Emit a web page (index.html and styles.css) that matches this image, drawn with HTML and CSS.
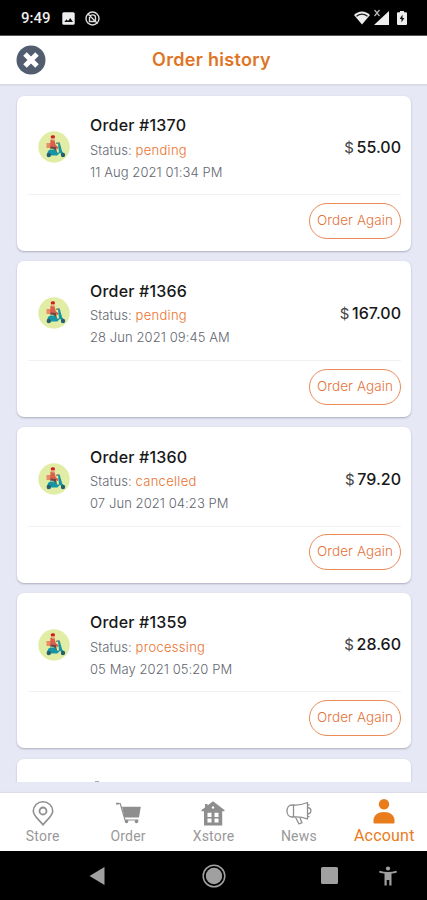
FILE: index.html
```
<!DOCTYPE html>
<html lang="en">
<head>
<meta charset="utf-8">
<title>Order history</title>
<link rel="stylesheet" href="styles.css">
</head>
<body>
<svg width="0" height="0" class="defs" aria-hidden="true">
  <symbol id="scooter" viewBox="0 0 32 32">
    <circle cx="16" cy="16" r="15.7" fill="#e1eda5"/>
    <path d="M8.5 12h5v5h-5z" fill="#e98b68"/>
    <path d="M12.5 8.5l4 .5 1.2 5 3 2.5-1 1.4-4.2-1.9-3.5.5z" fill="#d9604a"/>
    <path d="M13 15.5l5 .5 1 6h-2.2l-1-4-4-.5z" fill="#6b4a43"/>
    <path d="M12.8 5.5c.4-1.6 3.8-1.8 4.2 0l-.4 2h-3.5z" fill="#cf201d"/>
    <path d="M14 7.5h2.7v2H14z" fill="#efad8b"/>
    <path d="M20 12.5l1.8-.5 2.4 8.500 2.600 3-3-.5-2-1-2.500 2.500h-9.500c-1-3.500.5-6 3.500-6h4l1 3h2.700z" fill="#1695a5"/>
    <path d="M18 12.300l3.500-.5" stroke="#4f5960" stroke-width="1"/>
    <circle cx="10.800" cy="24" r="2.200" fill="#245f70"/>
    <circle cx="25" cy="24" r="2.200" fill="#245f70"/>
  </symbol>
</svg>
<div class="screen">
  <div class="statusbar">
    <span class="clock">9:49</span>
    <svg class="s-img" width="13" height="13" viewBox="0 0 13 13"><rect x=".3" y=".3" width="12.400" height="12.400" rx="1.500" fill="#eee"/><path d="M2.300 10l2.200-2.800 1.500 1.700 2.200-2.800 2.800 3.900z" fill="#111"/></svg>
    <svg class="s-dnd" width="15" height="15" viewBox="0 0 15 15" fill="none" stroke="#ddd"><circle cx="7.500" cy="7.500" r="6.500" stroke-width="1.400"/><path d="M4.500 10.500v-4c0-3.500 6-3.500 6 0v4zM3 3l9.500 9.500" stroke-width="1.400"/></svg>
    <span class="spacer"></span>
    <svg width="16" height="14" viewBox="0 0 16 14"><path d="M0 4C4.500-.7 11.500-.7 16 4L8 13.500z" fill="#eee"/><path d="M2.500 5.300c3.500-2.800 7.500-2.800 11 0" fill="none" stroke="#222" stroke-width="1.300"/></svg>
    <svg class="s-cell" width="17" height="17" viewBox="0 0 17 17"><path d="M16 2v14H1z" fill="#eee"/><path d="M1.500 1l5 6M6.500 1l-5 6" stroke="#000" stroke-width="3"/><path d="M1.500 1l5 6M6.500 1l-5 6" stroke="#bbb" stroke-width="1.200"/></svg>
    <svg class="s-bat" width="10" height="14" viewBox="0 0 10 14"><path d="M3 0h4v1.300h2.300l.7.700v11.300l-.7.700H.7l-.7-.7V2l.7-.7H3z" fill="#eee"/><path d="M5.500 3.500L2.700 8h1.800v3.500L7.300 7H5.500z" fill="#111"/></svg>
  </div>
  <header class="header">
    <svg class="close" width="30" height="30" viewBox="0 0 30 30"><circle cx="15" cy="15" r="14.500" fill="#525d70"/><path d="M9 9l12 12M21 9L9 21" stroke="#fff" stroke-width="5"/></svg>
    <h1 class="title">Order history</h1>
  </header>
  <main class="list">
    <article class="card">
      <div class="summary">
        <svg class="avatar"><use href="#scooter"/></svg>
        <div class="info"><h2 class="name">Order #1370</h2><p class="line">Status: <span class="state">pending</span></p><p class="line date">11 Aug 2021 01:34 PM</p></div>
        <div class="price"><span class="cur">$</span> 55.00</div>
      </div>
      <div class="actions"><button class="again">Order Again</button></div>
    </article>
    <article class="card">
      <div class="summary">
        <svg class="avatar"><use href="#scooter"/></svg>
        <div class="info"><h2 class="name">Order #1366</h2><p class="line">Status: <span class="state">pending</span></p><p class="line date">28 Jun 2021 09:45 AM</p></div>
        <div class="price"><span class="cur">$</span> 167.00</div>
      </div>
      <div class="actions"><button class="again">Order Again</button></div>
    </article>
    <article class="card">
      <div class="summary">
        <svg class="avatar"><use href="#scooter"/></svg>
        <div class="info"><h2 class="name">Order #1360</h2><p class="line">Status: <span class="state">cancelled</span></p><p class="line date">07 Jun 2021 04:23 PM</p></div>
        <div class="price"><span class="cur">$</span> 79.20</div>
      </div>
      <div class="actions"><button class="again">Order Again</button></div>
    </article>
    <article class="card">
      <div class="summary">
        <svg class="avatar"><use href="#scooter"/></svg>
        <div class="info"><h2 class="name">Order #1359</h2><p class="line">Status: <span class="state">processing</span></p><p class="line date">05 May 2021 05:20 PM</p></div>
        <div class="price"><span class="cur">$</span> 28.60</div>
      </div>
      <div class="actions"><button class="again">Order Again</button></div>
    </article>
    <article class="card"><div class="peek"></div></article>
  </main>
  <nav class="tabs">
    <a class="tab"><svg width="28" height="26" viewBox="0 0 28 26" fill="none" stroke="#8e8e8e"><path d="M14 23.800C10 18.500 4.300 15 4.300 10a9.700 9.200 0 0 1 19.400 0C23.700 15 18 18.500 14 23.800z" stroke-width="1.600"/><circle cx="14" cy="10" r="3.500" stroke-width="1.800"/></svg><span>Store</span></a>
    <a class="tab"><svg width="28" height="26" viewBox="0 0 28 26"><path d="M2.500 2.500h3.700l4.800 16.500h13.500" fill="none" stroke="#8e8e8e" stroke-width="1.200"/><path d="M2 1.800h3v1.800H2zM8 5.800h18.800l-1.800 10.700H10.500z" fill="#8e8e8e"/><circle cx="12.500" cy="20.500" r="1.800" fill="#8e8e8e"/><circle cx="22.500" cy="20.500" r="1.800" fill="#8e8e8e"/></svg><span>Order</span></a>
    <a class="tab"><svg width="28" height="26" viewBox="0 0 28 26"><path d="M14 .3L25.500 9v1.300h-2.300V24.500H5V10.300H2.500V9L6 6.400V3h2.500v1.500z" fill="#8e8e8e"/><circle cx="14" cy="6.500" r="1.200" fill="#fff"/><path d="M8.500 11.800h4V16h-4zM15.500 11.800h4V16h-4zM8.500 17.500h4v4h-4zM15.500 17.500h4v4h-4z" fill="#fff"/></svg><span>Xstore</span></a>
    <a class="tab"><svg width="28" height="26" viewBox="0 0 28 26" fill="none" stroke="#8e8e8e" stroke-width="1.300" stroke-linejoin="round"><path d="M8.500 4H7C.3 4 .3 16 7 16h1.500zM8.500 4c5.500.5 9-.5 14-2.500v16.500c-5-2-8.500-2.500-14-2M22.500 6.500c4.500.5 4.500 6 0 6.500M22.500 4.500l2-1M22.500 15l2 1M10.500 16.200l3.500 6.800 3-1.300-2.300-5.500"/></svg><span>News</span></a>
    <a class="tab active"><svg width="28" height="26" viewBox="0 0 28 26" fill="#e97c1d"><circle cx="14" cy="5.300" r="5.200"/><path d="M3.500 23.500v-2c0-5.300 4.500-8.500 10.500-8.500s10.500 3.200 10.500 8.500v2c0 .6-.4 1-1 1h-19c-.6 0-1-.4-1-1z"/></svg><span>Account</span></a>
  </nav>
  <div class="sysnav">
    <svg class="back" width="16" height="20" viewBox="0 0 16 20"><path d="M15.500 1v18L.5 10z" fill="#a0a0a0"/></svg>
    <svg class="home" width="24" height="24" viewBox="0 0 24 24"><circle cx="12" cy="12" r="10.800" fill="none" stroke="#a0a0a0" stroke-width="1.500"/><circle cx="12" cy="12" r="8.200" fill="#a0a0a0"/></svg>
    <svg class="recent" width="17" height="17" viewBox="0 0 17 17"><rect width="17" height="17" rx="1.500" fill="#a0a0a0"/></svg>
    <svg class="a11y" width="18" height="20" viewBox="0 0 18 20" fill="#a0a0a0"><circle cx="9" cy="2.500" r="2.100"/><path d="M.5 4.700C6 6.300 12 6.300 17.500 4.700l.4 1.700c-1.900.6-3.700.9-5.400 1.100V19.500h-2.200V14H7.700v5.500H5.500V7.500C3.800 7.300 2 7 .1 6.400z"/></svg>
  </div>
</div>
</body>
</html>
```
FILE: styles.css
```
* { box-sizing: border-box; }
body, h1, h2, p { margin: 0; }
.defs { position: absolute; }
.screen {
  width: 427px;
  height: 900px;
  display: flex;
  flex-direction: column;
  overflow: hidden;
  background: #e7e8f5;
  font-family: Inter, "Liberation Sans", sans-serif;
}
.statusbar {
  flex: none;
  height: 36px;
  display: flex;
  align-items: center;
  padding: 1px 20px 0 21px;
  background: #000;
  border-bottom: 1px solid #555;
}
.clock { width: 41px; color: #eee; font: 500 15px Roboto, sans-serif; }
.s-dnd { margin-left: 10px; }
.spacer { flex: 1; }
.s-cell { margin: -2px 7px 0 3px; }
.header {
  flex: none;
  height: 50px;
  display: flex;
  align-items: center;
  padding: 0 16px;
  background: #fff;
  border-bottom: 2px solid #dcdce9;
}
.close { flex: none; }
.title {
  flex: 1;
  margin-right: 34px;
  text-align: center;
  color: #df7424;
  font-size: 18px;
  font-weight: 600;
  line-height: 24px;
  letter-spacing: .3px;
}
.list {
  flex: none;
  height: 696px;
  overflow: hidden;
  padding: 9.500px 16px 0 17px;
  display: flex;
  flex-direction: column;
  gap: 10.300px;
}
.card {
  flex: none;
  height: 155.500px;
  padding: 0 10px 0 11px;
  background: #fff;
  border-radius: 7px;
  box-shadow: 0 1px 2px rgba(75, 75, 100, .38);
}
.summary {
  height: 99.500px;
  display: flex;
  align-items: flex-start;
  padding: 18.600px 0 0 10px;
  border-bottom: 1px solid #f2f2f2;
}
.avatar { width: 32px; height: 32px; margin-top: 17.200px; flex: none; }
.info { flex: 1; margin-left: 20px; white-space: nowrap; }
.name { color: #181818; font-size: 16px; font-weight: 500; line-height: 22px; letter-spacing: .2px; }
.line { color: #62666f; font-size: 13px; font-weight: 300; line-height: 22px; letter-spacing: .08px; }
.name + .line { margin-top: 2.500px; }
.state { color: #ea722f; letter-spacing: .3px; }
.price {
  margin-top: 22px;
  color: #181818;
  font-size: 16px;
  font-weight: 500;
  line-height: 22px;
  word-spacing: -1.500px;
}
.cur { color: #444; font-weight: 400; font-size: 15px; }
.actions { display: flex; justify-content: flex-end; padding-top: 7.800px; }
.again {
  width: 92px;
  height: 36px;
  padding: 0 0 2px;
  color: #e5733a;
  background: #fff;
  border: 1px solid #e98a58;
  border-radius: 18px;
  font: 300 13.500px Inter, sans-serif;
  letter-spacing: .1px;
  white-space: nowrap;
}
.peek { width: 4px; height: 1px; margin: 22px 0 0 67px; background: #aaa; }
.card:last-child { display: flow-root; }
.tabs {
  flex: none;
  height: 58px;
  margin-top: 11px;
  display: grid;
  grid-template-columns: repeat(5, 1fr);
  background: #fff;
  box-shadow: 0 -1px 1px #dcdce5;
}
.tab {
  display: flex;
  flex-direction: column;
  align-items: center;
  padding-top: 8px;
  color: #999;
  font: 400 14px/18px Roboto, sans-serif;
  letter-spacing: .2px;
}
.tab svg { flex: none; }
.active { padding-top: 6px; color: #e97c1d; font-size: 16px; line-height: 21px; }
.sysnav {
  flex: 1;
  display: flex;
  align-items: center;
  padding-left: 89px;
  background: #000;
}
.home { margin-left: 97px; }
.recent { margin-left: 95px; }
.a11y { margin-left: 41px; }
```
